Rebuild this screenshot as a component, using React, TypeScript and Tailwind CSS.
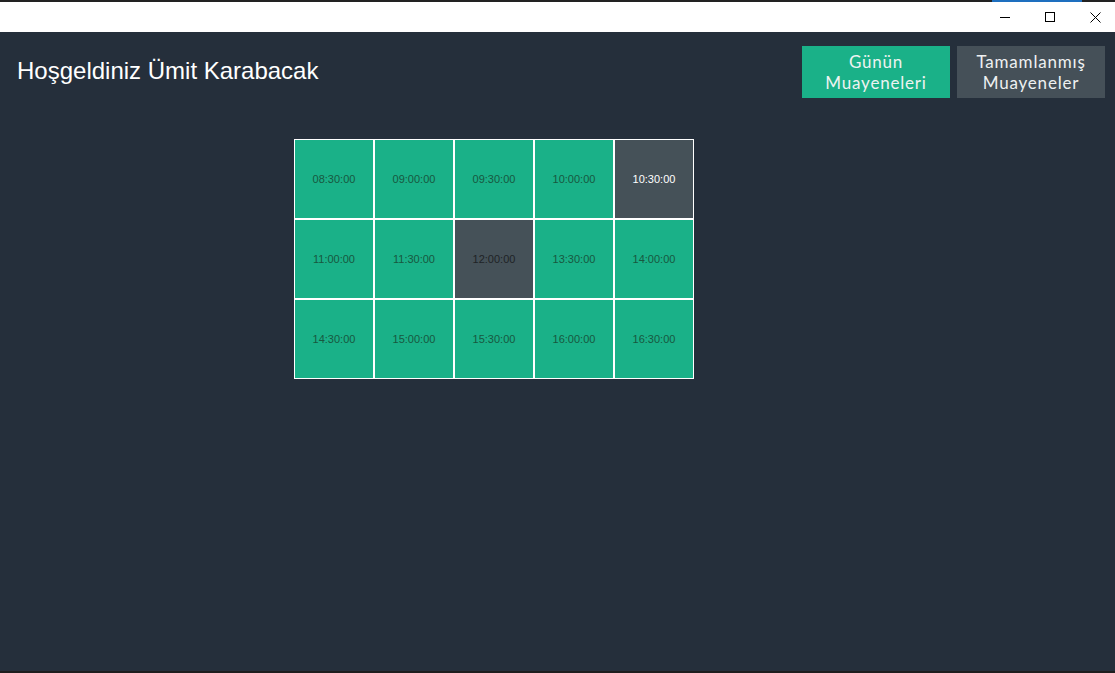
import React from "react";

const slots: { t: string; kind: "green" | "grayLight" | "grayDark" }[] = [
  { t: "08:30:00", kind: "green" },
  { t: "09:00:00", kind: "green" },
  { t: "09:30:00", kind: "green" },
  { t: "10:00:00", kind: "green" },
  { t: "10:30:00", kind: "grayLight" },
  { t: "11:00:00", kind: "green" },
  { t: "11:30:00", kind: "green" },
  { t: "12:00:00", kind: "grayDark" },
  { t: "13:30:00", kind: "green" },
  { t: "14:00:00", kind: "green" },
  { t: "14:30:00", kind: "green" },
  { t: "15:00:00", kind: "green" },
  { t: "15:30:00", kind: "green" },
  { t: "16:00:00", kind: "green" },
  { t: "16:30:00", kind: "green" },
];

export default function App() {
  return (
    <div className="flex h-[673px] w-full flex-col overflow-hidden bg-[#252f3b]">
      {/* top dark edge */}
      <div className="flex h-[2px] bg-[#222222]">
        <div className="ml-[992px] h-full w-[90px] bg-[#1e6fbf]" />
      </div>
      {/* title bar */}
      <div className="flex h-[30px] items-center justify-end bg-white pr-[14px]">
        <div className="flex items-center gap-[35px]">
          <svg width="10" height="10" viewBox="0 0 10 10">
            <line x1="0" y1="5.5" x2="10" y2="5.5" stroke="#000" strokeWidth="1" />
          </svg>
          <svg width="10" height="10" viewBox="0 0 10 10">
            <rect x="0.5" y="0.5" width="9" height="9" fill="none" stroke="#000" strokeWidth="1" />
          </svg>
          <svg width="11" height="11" viewBox="0 0 11 11">
            <path d="M0.5 0.5 L10.5 10.5 M10.5 0.5 L0.5 10.5" stroke="#000" strokeWidth="1" />
          </svg>
        </div>
      </div>
      {/* main */}
      <div className="flex flex-1 flex-col">
        <div className="flex items-center justify-between pl-[17px] pr-[10px] pt-[14px]">
          <h1
            className="mt-[-2px] text-[24px] leading-none text-white"
            style={{ fontFamily: '"Liberation Sans", Arial, sans-serif' }}
          >
            Hoşgeldiniz Ümit Karabacak
          </h1>
          <div className="flex gap-[7px]">
            <button
              className="flex h-[52px] w-[148px] items-center justify-center bg-[#1ab188] text-center text-[17px] leading-[21px] tracking-[0.8px] text-[#eef3f1]"
              style={{ fontFamily: '"Lato", "Open Sans", sans-serif' }}
            >
              Günün
              <br />
              Muayeneleri
            </button>
            <button
              className="flex h-[52px] w-[148px] items-center justify-center bg-[#455058] text-center text-[17px] leading-[21px] tracking-[0.8px] text-[#eef0f1]"
              style={{ fontFamily: '"Lato", "Open Sans", sans-serif' }}
            >
              Tamamlanmış
              <br />
              Muayeneler
            </button>
          </div>
        </div>
        <div className="ml-[294px] mt-[41px] grid w-[400px] grid-cols-5">
          {slots.map((s) => (
            <div
              key={s.t}
              className={
                "flex h-[80px] items-center justify-center border border-white text-[11px] " +
                (s.kind === "green"
                  ? "bg-[#1ab188] text-[#18583f]"
                  : s.kind === "grayLight"
                  ? "bg-[#455158] text-white"
                  : "bg-[#455158] text-[#1f2326]")
              }
              style={{ fontFamily: '"Liberation Sans", Arial, sans-serif' }}
            >
              {s.t}
            </div>
          ))}
        </div>
      </div>
      <div className="h-[2px] bg-[#1e1e1e]" />
    </div>
  );
}
